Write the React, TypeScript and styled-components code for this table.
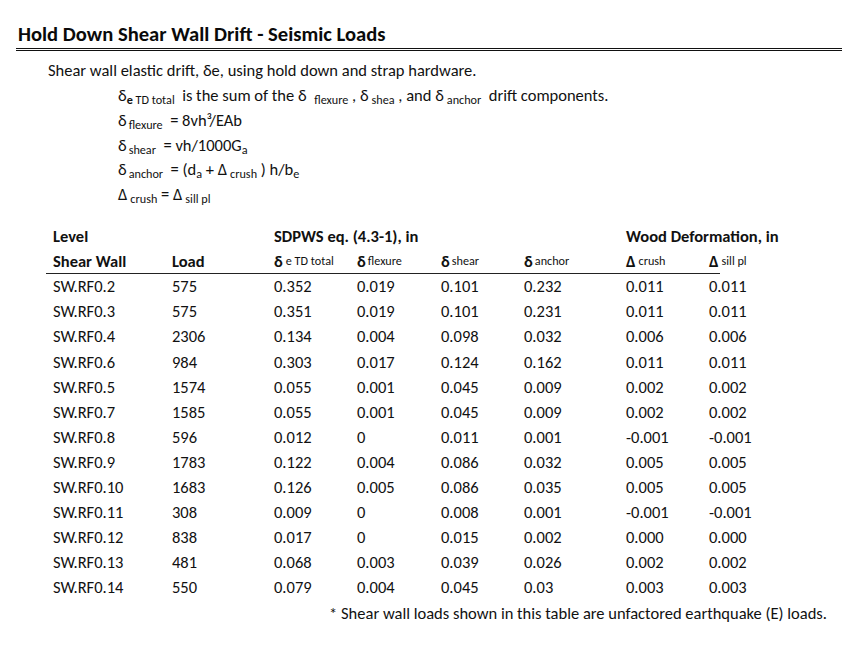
import React from 'react';
import styled, { createGlobalStyle } from 'styled-components';

const Global = createGlobalStyle`
  html, body { margin: 0; padding: 0; background: #fff; }
  body {
    font-family: Carlito, Lato, "Liberation Sans", sans-serif;
    color: #111;
  }
`;

const Page = styled.div`
  width: 842px;
  height: 648px;
  box-sizing: border-box;
  padding-top: 22px;
  padding-left: 16px;
  overflow: hidden;
`;

const TitleBar = styled.div`
  border-bottom: 3px double #111;
  padding: 0 0 2px 2px;
`;

const Title = styled.h1`
  margin: 0;
  font-size: 20.6px;
  font-weight: 700;
  line-height: 24px;
  color: #0a0a0a;
`;

const Intro = styled.p`
  margin: 9px 0 0 32px;
  font-size: 16.5px;
  line-height: 20px;
`;

const Formulas = styled.div`
  margin: 3px 0 0 102px;
  font-size: 16.5px;
  display: flex;
  flex-direction: column;
`;

const FormulaLine = styled.div`
  height: 24.75px;
  line-height: 24.75px;
  white-space: nowrap;
`;

const Sub = styled.span<{ $gap?: number; $bold?: boolean }>`
  font-size: 12.2px;
  vertical-align: -3px;
  margin-left: ${(p) => p.$gap ?? 0}px;
  font-weight: ${(p) => (p.$bold ? 700 : 400)};
`;

const Sym = styled.span<{ $bold?: boolean }>`
  font-weight: ${(p) => (p.$bold ? 700 : 'inherit')};
`;

const Table = styled.div`
  margin: 17px 0 0 37px;
  display: grid;
  grid-template-columns: 119px 102px 83px 84px 83px 102px 83px 1fr;
  font-size: 16.5px;
`;

const HeadCell = styled.div<{ $span?: number }>`
  height: 24.5px;
  display: flex;
  align-items: center;
  font-weight: 700;
  white-space: nowrap;
  grid-column: span ${(p) => p.$span ?? 1};
`;

const Rule = styled.div`
  grid-column: 1 / -1;
  width: 674px;
  margin-left: -7px;
  height: 1px;
  background: #222;
`;

const Cell = styled.div`
  height: 25.1px;
  display: flex;
  align-items: center;
  white-space: nowrap;
`;

const Footer = styled.div`
  margin-top: 1px;
  padding-right: 15px;
  text-align: right;
  font-size: 16.5px;
  line-height: 25px;
`;

const rows: string[][] = [
  ['SW.RF0.2', '575', '0.352', '0.019', '0.101', '0.232', '0.011', '0.011'],
  ['SW.RF0.3', '575', '0.351', '0.019', '0.101', '0.231', '0.011', '0.011'],
  ['SW.RF0.4', '2306', '0.134', '0.004', '0.098', '0.032', '0.006', '0.006'],
  ['SW.RF0.6', '984', '0.303', '0.017', '0.124', '0.162', '0.011', '0.011'],
  ['SW.RF0.5', '1574', '0.055', '0.001', '0.045', '0.009', '0.002', '0.002'],
  ['SW.RF0.7', '1585', '0.055', '0.001', '0.045', '0.009', '0.002', '0.002'],
  ['SW.RF0.8', '596', '0.012', '0', '0.011', '0.001', '-0.001', '-0.001'],
  ['SW.RF0.9', '1783', '0.122', '0.004', '0.086', '0.032', '0.005', '0.005'],
  ['SW.RF0.10', '1683', '0.126', '0.005', '0.086', '0.035', '0.005', '0.005'],
  ['SW.RF0.11', '308', '0.009', '0', '0.008', '0.001', '-0.001', '-0.001'],
  ['SW.RF0.12', '838', '0.017', '0', '0.015', '0.002', '0.000', '0.000'],
  ['SW.RF0.13', '481', '0.068', '0.003', '0.039', '0.026', '0.002', '0.002'],
  ['SW.RF0.14', '550', '0.079', '0.004', '0.045', '0.03', '0.003', '0.003'],
];

export default function App() {
  return (
    <>
      <Global />
      <Page>
        <TitleBar>
          <Title>Hold Down Shear Wall Drift - Seismic Loads</Title>
        </TitleBar>
        <Intro>Shear wall elastic drift, δe, using hold down and strap hardware.</Intro>
        <Formulas>
          <FormulaLine>
            δ<Sub $bold>e</Sub>
            <Sub> TD total</Sub>&nbsp; is the sum of the δ <Sub $gap={4}>flexure</Sub> , δ<Sub $gap={3}>shea</Sub> , and δ<Sub $gap={3}>anchor</Sub>&nbsp; drift components.
          </FormulaLine>
          <FormulaLine>
            δ<Sub $gap={2}>flexure</Sub>&nbsp; = 8vh³/EAb
          </FormulaLine>
          <FormulaLine>
            δ<Sub $gap={2}>shear</Sub>&nbsp; = vh/1000G<Sub>a</Sub>
          </FormulaLine>
          <FormulaLine>
            δ<Sub $gap={2}>anchor</Sub>&nbsp; = (d<Sub>a</Sub> + Δ<Sub $gap={3}>crush</Sub> ) h/b<Sub>e</Sub>
          </FormulaLine>
          <FormulaLine>
            Δ<Sub $gap={3}>crush</Sub> = Δ<Sub $gap={3}>sill pl</Sub>
          </FormulaLine>
        </Formulas>
        <Table>
          <HeadCell>Level</HeadCell>
          <HeadCell />
          <HeadCell $span={4}>SDPWS eq. (4.3-1), in</HeadCell>
          <HeadCell $span={2}>Wood Deformation, in</HeadCell>

          <HeadCell>Shear Wall</HeadCell>
          <HeadCell>Load</HeadCell>
          <HeadCell>
            <Sym $bold>δ</Sym>
            <Sub $gap={3}>e TD total</Sub>
          </HeadCell>
          <HeadCell>
            <Sym $bold>δ</Sym>
            <Sub $gap={2}>flexure</Sub>
          </HeadCell>
          <HeadCell>
            <Sym $bold>δ</Sym>
            <Sub $gap={2}>shear</Sub>
          </HeadCell>
          <HeadCell>
            <Sym $bold>δ</Sym>
            <Sub $gap={2}>anchor</Sub>
          </HeadCell>
          <HeadCell>
            <Sym $bold>Δ</Sym>
            <Sub $gap={3}>crush</Sub>
          </HeadCell>
          <HeadCell>
            <Sym $bold>Δ</Sym>
            <Sub $gap={3}>sill pl</Sub>
          </HeadCell>
          <Rule />
          {rows.map((r) => r.map((v, i) => <Cell key={r[0] + i}>{v}</Cell>))}
        </Table>
        <Footer>* Shear wall loads shown in this table are unfactored earthquake (E) loads.</Footer>
      </Page>
    </>
  );
}
